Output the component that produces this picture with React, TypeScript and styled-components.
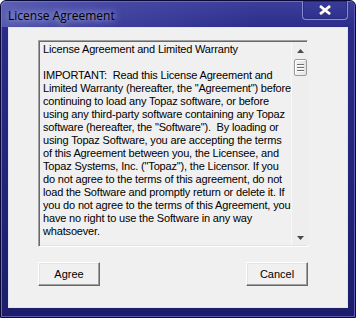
import React from 'react';
import styled, { createGlobalStyle } from 'styled-components';

const GlobalStyle = createGlobalStyle`
  html, body {
    margin: 0;
    padding: 0;
    background: #ffffff;
  }
`;

const Window = styled.div`
  width: 356px;
  height: 318px;
  box-sizing: border-box;
  display: flex;
  flex-direction: column;
  background: linear-gradient(to bottom, #3c3e9c 0px, #2a2b88 30px, #1d1d6c 100%);
  border: 1px solid #0a0a38;
  border-radius: 6px 6px 0 0;
  box-shadow: inset 1px 1px 0 #6a6cc0, inset -1px -1px 0 #5a5ab0;
  font-family: "Liberation Sans", Arial, sans-serif;
`;

const TitleBar = styled.div`
  height: 26px;
  display: flex;
  align-items: flex-start;
  justify-content: space-between;
  padding: 0 7px 0 7px;
  background: linear-gradient(to right, rgba(120, 124, 200, 0.55) 0px, rgba(90, 92, 180, 0.35) 120px, rgba(40, 40, 120, 0) 260px);
  border-radius: 5px 5px 0 0;
`;

const Title = styled.div`
  margin-top: 7px;
  font-family: "Open Sans", "Noto Sans", sans-serif;
  font-size: 12px;
  line-height: 16px;
  color: #000000;
  text-shadow: 0 0 6px rgba(200, 205, 255, 0.9), 0 0 10px rgba(200, 205, 255, 0.6);
`;

const CloseButton = styled.div`
  width: 44px;
  height: 18px;
  display: flex;
  align-items: center;
  justify-content: center;
  border: 1px solid #8a8cd0;
  border-top: none;
  border-radius: 0 0 4px 4px;
  background: linear-gradient(to bottom, #3a3c98, #2e3090);
  box-shadow: inset 0 0 0 1px #2a2c7c;
`;

const Client = styled.div`
  flex: 1;
  margin: 0 7px 9px 7px;
  background: #f0f0f0;
  border: 1px solid #e4e4f0;
  display: flex;
  flex-direction: column;
  padding: 12px 39px 0 29px;
`;

const EditBox = styled.div`
  height: 207px;
  box-sizing: border-box;
  display: flex;
  background: #f0f0f0;
  border-style: solid;
  border-width: 1px;
  border-color: #a0a0a0 #ffffff #ffffff #a0a0a0;
  box-shadow: inset 1px 1px 0 #696969, inset -1px -1px 0 #e3e3e3;
  padding: 2px 1px 1px 2px;
`;

const TextArea = styled.div`
  flex: 1;
  padding: 0 0 0 2px;
  font-size: 11px;
  line-height: 13px;
  letter-spacing: -0.17px;
  color: #000000;
`;

const Line = styled.div`
  height: 13px;
  white-space: pre;
`;

const ScrollBar = styled.div`
  width: 17px;
  display: flex;
  flex-direction: column;
  align-items: center;
  background: #eeeeee;
  border-left: 1px solid #f8f8f8;
`;

const ArrowButton = styled.div`
  width: 17px;
  height: 15px;
  display: flex;
  align-items: center;
  justify-content: center;
`;

const Track = styled.div`
  flex: 1;
  width: 100%;
  display: flex;
  flex-direction: column;
  align-items: center;
`;

const Thumb = styled.div`
  width: 13px;
  height: 17px;
  box-sizing: border-box;
  margin-top: 1px;
  border: 1px solid #9a9a9a;
  border-radius: 2px;
  background: linear-gradient(to right, #f4f4f4, #e2e2e2);
  box-shadow: inset 1px 1px 0 #ffffff;
  display: flex;
  flex-direction: column;
  align-items: center;
  justify-content: center;
  gap: 2px;
`;

const Grip = styled.div`
  width: 7px;
  height: 1px;
  background: #6f6f6f;
  box-shadow: 0 1px 0 #ffffff;
`;

const ButtonRow = styled.div`
  display: flex;
  justify-content: space-between;
  margin-top: 15px;
`;

const Button = styled.div`
  width: 62px;
  height: 24px;
  box-sizing: border-box;
  display: flex;
  align-items: center;
  justify-content: center;
  background: #f0f0f0;
  border-style: solid;
  border-width: 1px;
  border-color: #ffffff #696969 #696969 #ffffff;
  box-shadow: inset -1px -1px 0 #a0a0a0, inset 1px 1px 0 #e3e3e3;
  font-size: 11px;
  color: #000000;
`;

const lines = [
  'License Agreement and Limited Warranty',
  '',
  'IMPORTANT:  Read this License Agreement and',
  'Limited Warranty (hereafter, the "Agreement") before',
  'continuing to load any Topaz software, or before',
  'using any third-party software containing any Topaz',
  'software (hereafter, the "Software").  By loading or',
  'using Topaz Software, you are accepting the terms',
  'of this Agreement between you, the Licensee, and',
  'Topaz Systems, Inc. ("Topaz"), the Licensor. If you',
  'do not agree to the terms of this agreement, do not',
  'load the Software and promptly return or delete it. If',
  'you do not agree to the terms of this Agreement, you',
  'have no right to use the Software in any way',
  'whatsoever.',
];

const CloseIcon = () => (
  <svg width="12" height="10" viewBox="0 0 12 10">
    <path d="M1 1 L11 9 M11 1 L1 9" stroke="#5a5a7a" strokeWidth="3" transform="translate(0.5 0.5)" />
    <path d="M1 1 L11 9 M11 1 L1 9" stroke="#ffffff" strokeWidth="2.6" />
  </svg>
);

const UpArrow = () => (
  <svg width="7" height="4" viewBox="0 0 7 4">
    <path d="M3.5 0 L7 4 L0 4 Z" fill="#4a4a4a" />
  </svg>
);

const DownArrow = () => (
  <svg width="7" height="4" viewBox="0 0 7 4">
    <path d="M0 0 L7 0 L3.5 4 Z" fill="#4a4a4a" />
  </svg>
);

export default function App() {
  return (
    <>
      <GlobalStyle />
      <Window>
        <TitleBar>
          <Title>License Agreement</Title>
          <CloseButton>
            <CloseIcon />
          </CloseButton>
        </TitleBar>
        <Client>
          <EditBox>
            <TextArea>
              {lines.map((l, i) => (
                <Line key={i}>{l}</Line>
              ))}
            </TextArea>
            <ScrollBar>
              <ArrowButton>
                <UpArrow />
              </ArrowButton>
              <Track>
                <Thumb>
                  <Grip />
                  <Grip />
                  <Grip />
                </Thumb>
              </Track>
              <ArrowButton>
                <DownArrow />
              </ArrowButton>
            </ScrollBar>
          </EditBox>
          <ButtonRow>
            <Button>Agree</Button>
            <Button>Cancel</Button>
          </ButtonRow>
        </Client>
      </Window>
    </>
  );
}
